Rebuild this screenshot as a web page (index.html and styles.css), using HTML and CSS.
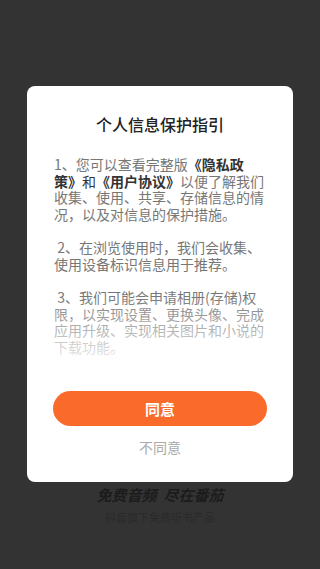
FILE: index.html
```html
<!DOCTYPE html>
<html lang="zh-CN">
<head>
<meta charset="utf-8">
<meta name="viewport" content="width=320">
<title>个人信息保护指引</title>
<link rel="stylesheet" href="styles.css">
</head>
<body>
<div class="page">
  <div class="dialog">
    <div class="title">个人信息保护指引</div>
    <div class="content">
      <p class="para">1、您可以查看完整版<b class="link">《隐私政<wbr>策》</b><span class="dark">和</span><b class="link">《用户协议》</b>以便了解我们收集、使用、共享、存储信息的情况，以及对信息的保护措施。</p>
      <p class="para">&nbsp;2、在浏览使用时，我们会收集、使用设备标识信息用于推荐。</p>
      <p class="para">&nbsp;3、我们可能会申请相册(存储)权限，以实现设置、更换头像、完成应用升级、实现相关图片和小说的下载功能。</p>
      <div class="fade"></div>
    </div>
    <div class="agree">同意</div>
    <div class="disagree">不同意</div>
  </div>
  <div class="slogan">免费音频&nbsp;&nbsp;尽在番茄</div>
  <div class="sub">抖音旗下免费听书产品</div>
</div>
</body>
</html>
```
FILE: styles.css
```css
html, body {
  margin: 0;
  padding: 0;
}
body {
  width: 320px;
  height: 569px;
  overflow: hidden;
  background: #333333;
  font-family: "Noto Sans CJK SC", "Noto Sans", sans-serif;
}
.page {
  display: flex;
  flex-direction: column;
  align-items: center;
  padding-top: 86px;
}
.dialog {
  width: 266px;
  box-sizing: border-box;
  background: #ffffff;
  border-radius: 8px;
  padding: 27px 0 25px;
  display: flex;
  flex-direction: column;
}
.title {
  font-size: 16px;
  line-height: 22px;
  font-weight: 500;
  color: #222222;
  text-align: center;
}
.content {
  position: relative;
  margin-top: 21px;
  padding: 0 26px 0 27px;
  height: 215px;
  overflow: hidden;
}
.para {
  margin: 0 0 17px;
  font-size: 14px;
  line-height: 16.5px;
  color: #777777;
}
.link {
  color: #333333;
  font-weight: bold;
}
.dark {
  color: #333333;
}
.fade {
  position: absolute;
  left: 0;
  right: 0;
  bottom: 0;
  height: 75px;
  background: linear-gradient(rgba(255,255,255,0), rgba(255,255,255,0.7) 70%, #ffffff);
}
.agree {
  margin: 20px 26px 0;
  height: 35px;
  border-radius: 18px;
  background: #f96a2b;
  color: #ffffff;
  font-size: 15px;
  font-weight: bold;
  display: flex;
  align-items: center;
  justify-content: center;
}
.disagree {
  margin-top: 11px;
  font-size: 14px;
  line-height: 20px;
  color: #aaaaaa;
  text-align: center;
}
.slogan {
  margin-top: 3px;
  font-size: 15px;
  line-height: 20px;
  font-weight: bold;
  font-style: italic;
  color: #1c1c1c;
}
.sub {
  margin-top: 5px;
  font-size: 11px;
  line-height: 15px;
  color: #2a2a2a;
}
```
